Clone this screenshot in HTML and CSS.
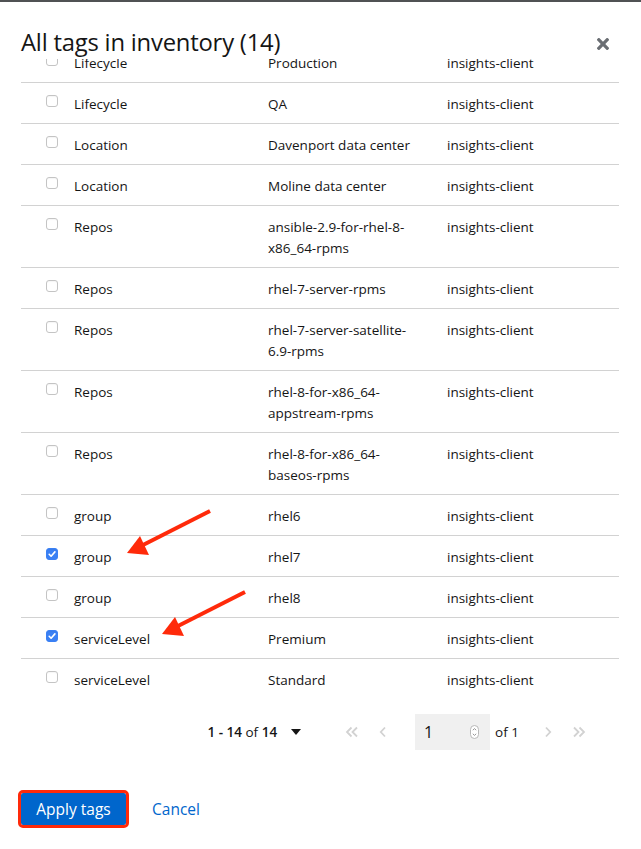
FILE: index.html
```html
<!DOCTYPE html>
<html lang="en">
<head>
<meta charset="utf-8">
<title>All tags in inventory</title>
<link rel="stylesheet" href="styles.css">
</head>
<body>
<div class="backdrop-edge"></div>
<div class="modal">
  <header class="modal-header">
    <h1 class="modal-title">All tags in inventory (14)</h1>
    <button class="close-btn" aria-label="Close">
      <svg viewBox="0 80 352 352" width="12" height="12"><path fill="currentColor" d="M242.72 256l100.07-100.07c12.280-12.280 12.280-32.190 0-44.480l-22.240-22.240c-12.280-12.280-32.190-12.280-44.480 0L176 189.280 75.930 89.210c-12.280-12.280-32.190-12.280-44.480 0L9.210 111.450c-12.280 12.280-12.280 32.190 0 44.480L109.280 256 9.210 356.070c-12.280 12.280-12.280 32.190 0 44.480l22.240 22.240c12.280 12.280 32.200 12.280 44.480 0L176 322.720l100.070 100.070c12.280 12.280 32.200 12.280 44.480 0l22.240-22.240c12.280-12.280 12.280-32.190 0-44.480L242.720 256z"/></svg>
    </button>
  </header>
  <div class="modal-body">
    <div class="tag-table">
      <div class="row"><div class="cell cb-cell"><span class="cb"></span></div><div class="cell">Lifecycle</div><div class="cell val">Production</div><div class="cell">insights-client</div></div>
      <div class="row"><div class="cell cb-cell"><span class="cb"></span></div><div class="cell">Lifecycle</div><div class="cell val">QA</div><div class="cell">insights-client</div></div>
      <div class="row"><div class="cell cb-cell"><span class="cb"></span></div><div class="cell">Location</div><div class="cell val">Davenport data center</div><div class="cell">insights-client</div></div>
      <div class="row"><div class="cell cb-cell"><span class="cb"></span></div><div class="cell">Location</div><div class="cell val">Moline data center</div><div class="cell">insights-client</div></div>
      <div class="row"><div class="cell cb-cell"><span class="cb"></span></div><div class="cell">Repos</div><div class="cell val">ansible-2.9-for-rhel-8-x86_64-rpms</div><div class="cell">insights-client</div></div>
      <div class="row"><div class="cell cb-cell"><span class="cb"></span></div><div class="cell">Repos</div><div class="cell val">rhel-7-server-rpms</div><div class="cell">insights-client</div></div>
      <div class="row"><div class="cell cb-cell"><span class="cb"></span></div><div class="cell">Repos</div><div class="cell val">rhel-7-server-satellite-6.9-rpms</div><div class="cell">insights-client</div></div>
      <div class="row"><div class="cell cb-cell"><span class="cb"></span></div><div class="cell">Repos</div><div class="cell val">rhel-8-for-x86_64-appstream-rpms</div><div class="cell">insights-client</div></div>
      <div class="row"><div class="cell cb-cell"><span class="cb"></span></div><div class="cell">Repos</div><div class="cell val">rhel-8-for-x86_64-baseos-rpms</div><div class="cell">insights-client</div></div>
      <div class="row"><div class="cell cb-cell"><span class="cb"></span></div><div class="cell">group</div><div class="cell val">rhel6</div><div class="cell">insights-client</div></div>
      <div class="row"><div class="cell cb-cell"><span class="cb checked"><svg viewBox="0 0 12 12" width="12" height="12"><path d="M3.2 6.3 L5.1 8.2 L8.9 3.9" fill="none" stroke="#fff" stroke-width="1.6" stroke-linecap="round" stroke-linejoin="round"/></svg></span></div><div class="cell">group</div><div class="cell val">rhel7</div><div class="cell">insights-client</div></div>
      <div class="row"><div class="cell cb-cell"><span class="cb"></span></div><div class="cell">group</div><div class="cell val">rhel8</div><div class="cell">insights-client</div></div>
      <div class="row"><div class="cell cb-cell"><span class="cb checked"><svg viewBox="0 0 12 12" width="12" height="12"><path d="M3.2 6.3 L5.1 8.2 L8.9 3.9" fill="none" stroke="#fff" stroke-width="1.6" stroke-linecap="round" stroke-linejoin="round"/></svg></span></div><div class="cell">serviceLevel</div><div class="cell val">Premium</div><div class="cell">insights-client</div></div>
      <div class="row"><div class="cell cb-cell"><span class="cb"></span></div><div class="cell">serviceLevel</div><div class="cell val">Standard</div><div class="cell">insights-client</div></div>
    </div>
  </div>
  <div class="pagination">
    <div class="per-page"><span><b>1 - 14</b> of <b>14</b></span>
      <svg class="caret" viewBox="0 0 10 6" width="10" height="6"><path d="M0 0 H10 L5 6 Z" fill="#151515"/></svg>
    </div>
    <button class="nav-btn first" aria-label="First page"><svg viewBox="0 0 14 12" width="14" height="12"><path d="M6.5 1.5 L2 6 L6.5 10.5 M12 1.5 L7.5 6 L12 10.5" fill="none" stroke="currentColor" stroke-width="1.8"/></svg></button>
    <button class="nav-btn" aria-label="Previous page"><svg viewBox="0 0 8 12" width="8" height="12"><path d="M6 1.5 L1.8 6 L6 10.5" fill="none" stroke="currentColor" stroke-width="1.8"/></svg></button>
    <div class="page-input"><span>1</span>
      <svg class="spinner" viewBox="0 0 9 14" width="9" height="14"><rect x="0.5" y="0.5" width="8" height="13" rx="4" fill="#fff" stroke="#b8b8b8"/><path d="M2.8 5.2 L4.5 3.6 L6.2 5.2 M2.8 8.8 L4.5 10.4 L6.2 8.8" fill="none" stroke="#8a8a8a" stroke-width="0.9"/></svg>
    </div>
    <span class="of-pages">of 1</span>
    <button class="nav-btn next" aria-label="Next page"><svg viewBox="0 0 8 12" width="8" height="12"><path d="M2 1.5 L6.2 6 L2 10.5" fill="none" stroke="currentColor" stroke-width="1.8"/></svg></button>
    <button class="nav-btn" aria-label="Last page"><svg viewBox="0 0 14 12" width="14" height="12"><path d="M2 1.5 L6.5 6 L2 10.5 M7.5 1.5 L12 6 L7.5 10.5" fill="none" stroke="currentColor" stroke-width="1.8"/></svg></button>
  </div>
  <footer class="modal-footer">
    <button class="btn-primary">Apply tags</button>
    <button class="btn-link">Cancel</button>
  </footer>
</div>
<svg class="annotations" width="641" height="849" viewBox="0 0 641 849">
  <line x1="210" y1="511" x2="143" y2="545" stroke="#ff2a0a" stroke-width="4"/>
  <polygon points="127,553 149,555 140,536" fill="#ff2a0a"/>
  <line x1="245" y1="592" x2="178" y2="626" stroke="#ff2a0a" stroke-width="4"/>
  <polygon points="162,634 184,636 175,617" fill="#ff2a0a"/>
</svg>
</body>
</html>
```
FILE: styles.css
```css
* { box-sizing: border-box; }
html, body { margin: 0; padding: 0; }
body {
  background: #fff;
  font-family: "Open Sans", "Liberation Sans", sans-serif;
  color: #151515;
  width: 641px;
  height: 849px;
  overflow: hidden;
  position: relative;
}
.backdrop-edge { height: 2px; background: #505254; }
.modal { padding: 0 22px 0 21px; }
.modal-header {
  display: flex;
  align-items: center;
  justify-content: space-between;
  padding-top: 25px;
  padding-bottom: 2px;
  height: 57px;
}
.modal-title {
  margin: 0;
  font-size: 23.8px;
  font-weight: 400;
  line-height: 30px;
  letter-spacing: -0.2px;
}
.close-btn {
  border: 0;
  background: none;
  padding: 0;
  color: #6a6e73;
  display: flex;
  margin-right: 10px;
  margin-top: 4px;
}
.modal-body {
  height: 640px;
  overflow: hidden;
}
.tag-table { margin-top: -17px; }
.row {
  display: grid;
  grid-template-columns: 53px 194px 179px 1fr;
  border-bottom: 1px solid #d2d2d2;
  font-size: 13.5px;
  line-height: 21px;
  padding: 11px 0 8px;
}
.cb-cell { padding-left: 25px; padding-top: 1px; }
.val { padding-right: 28px; }
.cb {
  display: block;
  width: 12px;
  height: 12px;
  border: 1px solid #c4c4c4;
  border-radius: 3px;
  background: #fff;
  box-shadow: inset 0 1px 1px rgba(0,0,0,0.04);
}
.cb.checked {
  background: #3a80f4;
  border-color: #3a80f4;
}
.cb svg { display: block; margin: -1px; }
.pagination {
  display: flex;
  align-items: center;
  justify-content: flex-end;
  height: 36px;
  margin-top: 15px;
  padding-right: 25px;
  font-size: 13.5px;
}
.per-page {
  display: flex;
  align-items: center;
  margin-right: 35px;
}
.per-page b { font-weight: 600; }
.caret { margin-left: 14px; }
.nav-btn {
  border: 0;
  background: none;
  padding: 0;
  width: 31px;
  height: 36px;
  display: flex;
  align-items: center;
  justify-content: center;
  color: #d2d2d2;
}
.nav-btn.next { margin-left: 13px; }
.page-input {
  margin-left: 17px;
  width: 75px;
  height: 36px;
  background: #f0f0f0;
  display: flex;
  align-items: center;
  justify-content: space-between;
  padding: 0 11px 0 9px;
  font-size: 16px;
}
.of-pages { margin-left: 5px; }
.modal-footer {
  display: flex;
  align-items: center;
  padding-top: 43px;
}
.btn-primary {
  font-family: inherit;
  font-size: 15.5px;
  color: #fff;
  background: #0066cc;
  border: 0;
  border-radius: 2px;
  height: 32px;
  width: 105px;
  padding: 0;
  outline: 3px solid #ff2a0a;
}
.btn-link {
  font-family: inherit;
  font-size: 15.5px;
  color: #0066cc;
  background: none;
  border: 0;
  padding: 0;
  margin-left: 26px;
}
.annotations {
  position: absolute;
  left: 0;
  top: 0;
  pointer-events: none;
}
```
